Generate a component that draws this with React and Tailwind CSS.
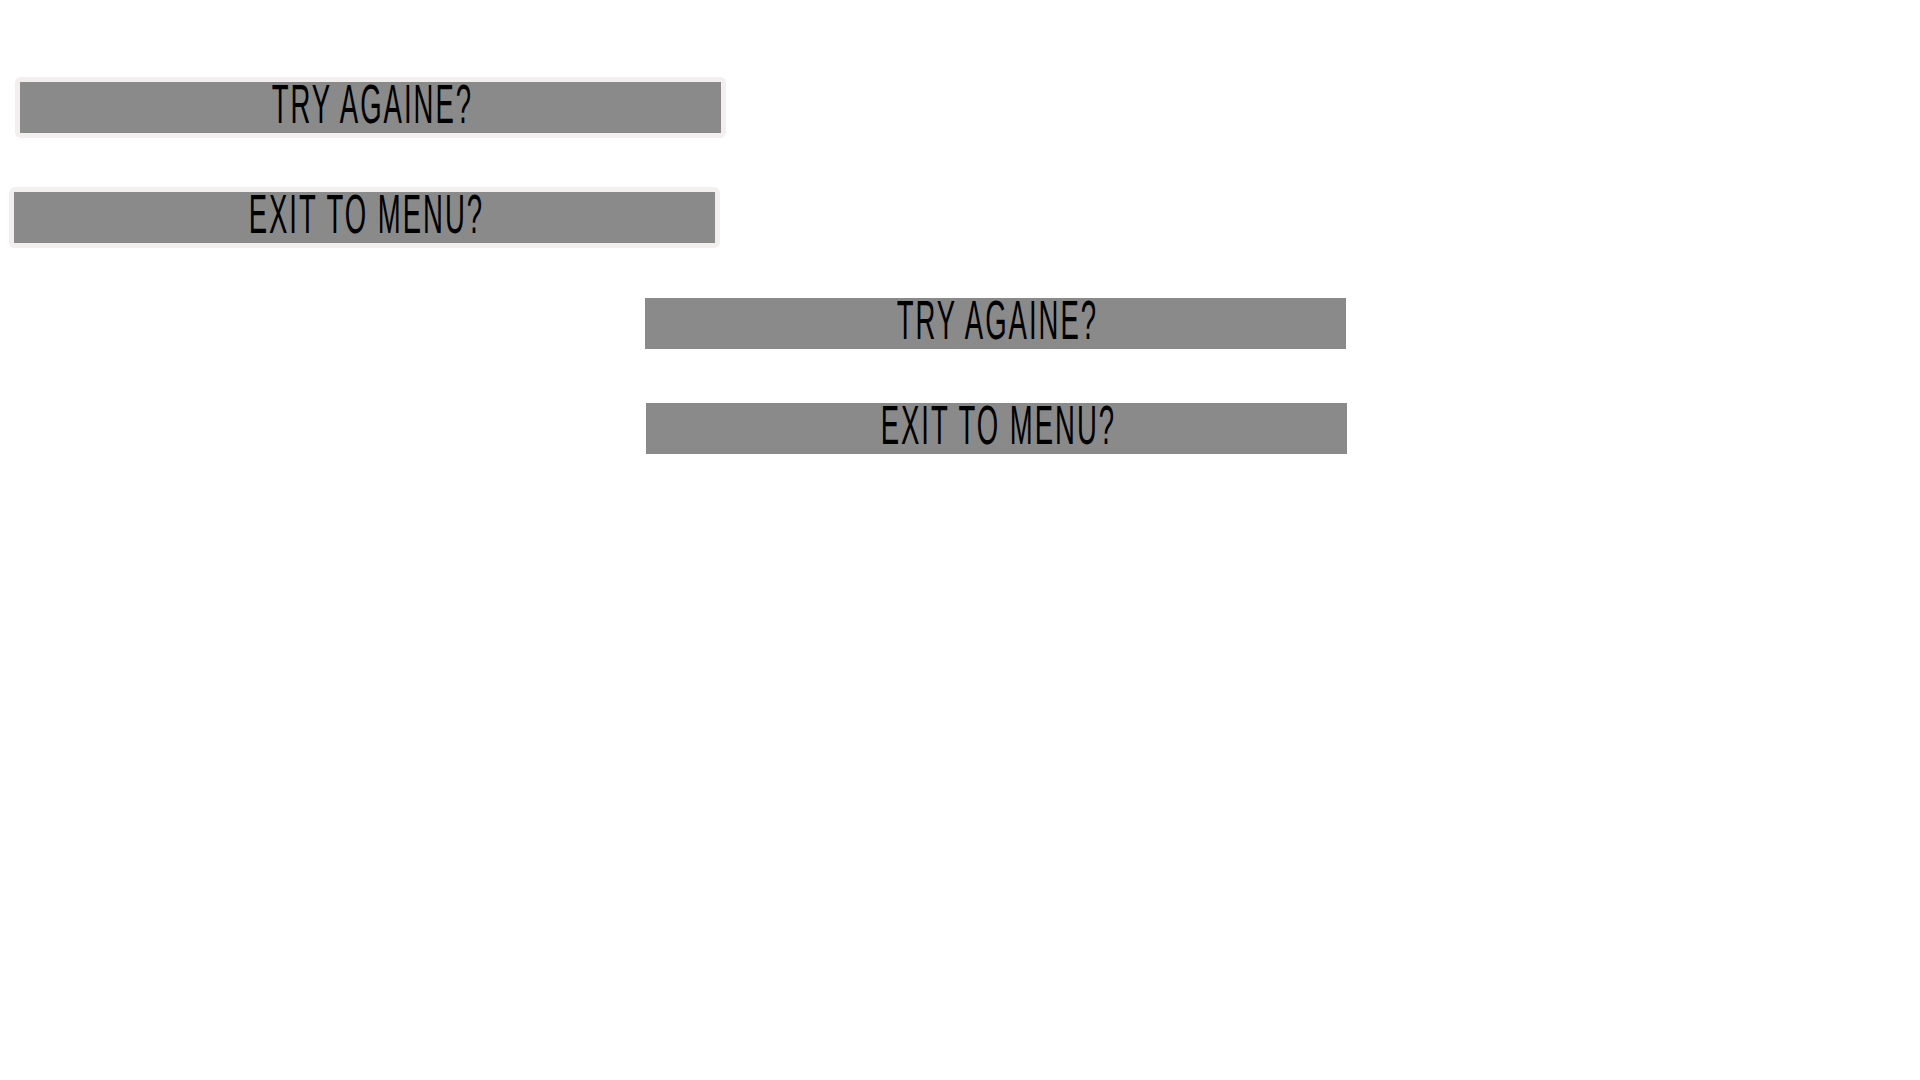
const labelFont = { fontFamily: '"Liberation Sans", Arial, sans-serif' };

const Label = ({ children }) => (
  <span className="mr-[-4px] inline-block origin-center scale-x-[0.5] whitespace-nowrap text-[55px] leading-[1.15] tracking-[4px] text-black" style={labelFont}>
    {children}
  </span>
);

const PlainButton = ({ children, className }) => (
  <button type="button" className={`flex h-[51px] w-[701px] items-center justify-center bg-[#8a8a8a] pb-[6px] ${className}`}>
    <Label>{children}</Label>
  </button>
);

const FramedButton = ({ children, className }) => (
  <div className={`w-[711px] rounded-[6px] bg-[#f3efee] p-[5px] ${className}`}>
    <PlainButton>{children}</PlainButton>
  </div>
);

const App = () => {
  return (
    <main className="min-h-screen w-full bg-white">
      <div className="flex flex-col items-start">
        <FramedButton className="ml-[15px] mt-[77px]">TRY AGAINE?</FramedButton>
        <FramedButton className="ml-[9px] mt-[49px]">EXIT TO MENU?</FramedButton>
        <PlainButton className="ml-[645px] mt-[50px]">TRY AGAINE?</PlainButton>
        <PlainButton className="ml-[646px] mt-[54px]">EXIT TO MENU?</PlainButton>
      </div>
    </main>
  );
};

export default App;
